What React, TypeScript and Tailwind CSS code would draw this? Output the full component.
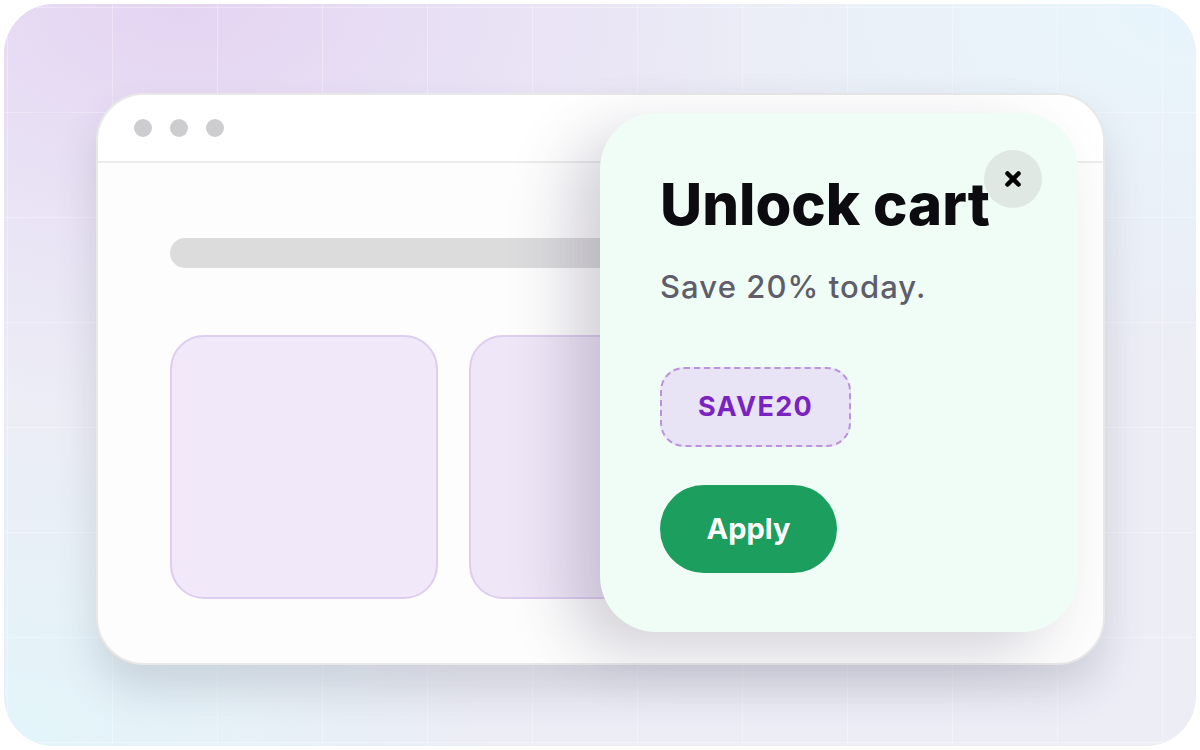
import { X } from "lucide-react";

const App = () => {
  return (
    <div className="w-[1200px] h-[750px] bg-white p-1 font-['Inter','Liberation_Sans',sans-serif]">
      <div className="relative w-full h-full rounded-[50px] overflow-hidden bg-[#ecedf5]">
        <div className="absolute inset-0 bg-[radial-gradient(ellipse_70%_70%_at_15%_0%,rgba(228,212,242,1)_0%,rgba(232,222,245,0.6)_45%,transparent_80%)]" />
        <div className="absolute inset-0 bg-[radial-gradient(ellipse_60%_60%_at_100%_0%,rgba(232,245,252,1)_0%,transparent_80%)]" />
        <div className="absolute inset-0 bg-[radial-gradient(ellipse_45%_50%_at_0%_100%,rgba(226,245,250,1)_0%,transparent_90%)]" />
        <div className="absolute inset-0 bg-[linear-gradient(to_right,rgba(255,255,255,0.3)_1px,transparent_1px),linear-gradient(to_bottom,rgba(255,255,255,0.3)_1px,transparent_1px)] bg-[size:105px_105px] bg-[position:3px_3px]" />
        <div className="relative pl-[92px] pt-[89px]">
          <div className="relative w-[1009px] h-[572px] rounded-[48px] bg-[#fdfdfd] border-2 border-[#e8e8e8] shadow-[0_25px_40px_rgba(70,80,100,0.18)]">
            <div className="h-[68px] flex items-center gap-[18px] pl-[36px] border-b-2 border-[#ececec] bg-white rounded-t-[48px]">
              <span className="w-[18px] h-[18px] rounded-full bg-[#cdcdcf]" />
              <span className="w-[18px] h-[18px] rounded-full bg-[#cdcdcf]" />
              <span className="w-[18px] h-[18px] rounded-full bg-[#cdcdcf]" />
            </div>
            <div className="pl-[72px] pt-[75px]">
              <div className="w-[520px] h-[30px] rounded-full bg-[#dcdcdd]" />
              <div className="flex gap-[31px] mt-[67px]">
                <div className="w-[268px] h-[264px] rounded-[34px] bg-[#f1e9f9] border-2 border-[#ddcdef]" />
                <div className="w-[268px] h-[264px] rounded-[34px] bg-[#efe6f7] border-2 border-[#ddcdef]" />
              </div>
            </div>
            <div className="absolute left-[502px] top-[18px] w-[478px] h-[519px] rounded-[56px] bg-[#f0fdf6] shadow-[-30px_20px_60px_rgba(70,60,90,0.22)] pl-[60px] pt-[56px]">
              <button className="absolute right-[36px] top-[37px] w-[58px] h-[58px] rounded-full bg-[#e0e8e3] flex items-center justify-center">
                <X className="w-[22px] h-[22px] text-black" strokeWidth={5} />
              </button>
              <h1 className="text-[58px] leading-[70px] font-extrabold tracking-normal text-[#0c0c10]">Unlock cart</h1>
              <p className="mt-[30px] text-[31px] leading-[36px] font-medium tracking-[0.035em] text-[#5f5d6a]">Save 20% today.</p>
              <div className="mt-[62px] w-[191px] h-[80px] rounded-[24px] border-2 border-dashed border-[#b993dc] bg-[#e8e4f5] flex items-center justify-center">
                <span className="text-[27px] font-bold tracking-[0.05em] text-[#7a23c1]">SAVE20</span>
              </div>
              <button className="mt-[38px] w-[177px] h-[88px] rounded-full bg-[#1c9f5e] text-white text-[29px] font-bold">Apply</button>
            </div>
          </div>
        </div>
      </div>
    </div>
  );
};

export default App;
